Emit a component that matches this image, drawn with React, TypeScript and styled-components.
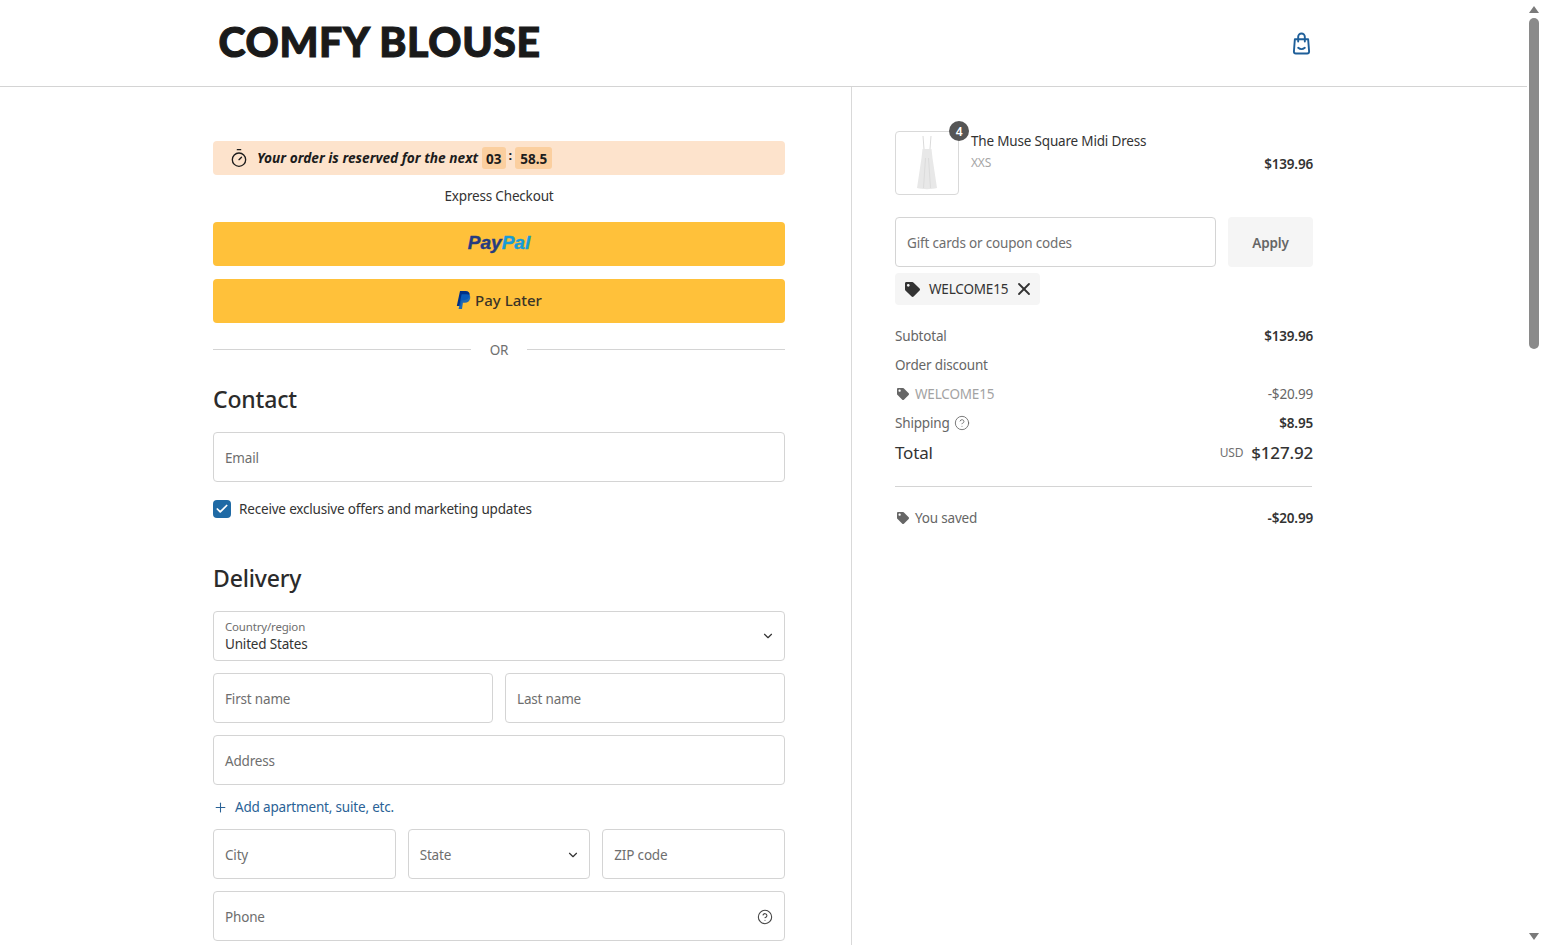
import React from 'react';
import styled, { createGlobalStyle } from 'styled-components';
import { Timer, Check, ChevronDown, Plus, X, CircleHelp } from 'lucide-react';
import { FaTag } from 'react-icons/fa';

const Global = createGlobalStyle`
  html, body { height: 100%; }
  body { margin: 0; background: #fff; color: #333; font-family: "Noto Sans", "Open Sans", Arial, sans-serif; font-size: 13.5px; letter-spacing: -0.18px; overflow: hidden; }
  * { box-sizing: border-box; }
`;

const Shell = styled.div`
  display: flex;
  height: 100vh;
  overflow: hidden;
`;
const Page = styled.div`
  flex: 1;
  min-width: 0;
  display: flex;
  flex-direction: column;
  overflow: hidden;
`;
const ScrollTrack = styled.div`
  width: 14px;
  flex: none;
  display: flex;
  flex-direction: column;
  align-items: center;
`;
const ScrollArrow = styled.div`
  height: 18px;
  display: flex;
  align-items: center;
  justify-content: center;
  color: #7a7a7a;
`;
const ScrollThumb = styled.div`
  width: 10px;
  height: 331px;
  border-radius: 5px;
  background: #8a8a8a;
`;
const ScrollSpace = styled.div`
  flex: 1;
`;

const Header = styled.header`
  height: 87px;
  flex: none;
  border-bottom: 1px solid #d4d4d4;
  display: flex;
  justify-content: center;
`;
const HeaderInner = styled.div`
  width: 1100px;
  display: flex;
  align-items: center;
  justify-content: space-between;
  padding: 0 3px 0 5px;
`;
const Logo = styled.div`
  font-family: Lato, sans-serif;
  font-weight: 900;
  font-size: 41px;
  line-height: 1;
  color: #1a1a1a;
  letter-spacing: 0.65px;
  -webkit-text-stroke: 1.1px #1a1a1a;
  margin-top: -4px;
`;
const BagLink = styled.a`
  display: flex;
  color: #1f5f99;
`;
const Checkout = styled.div`
  flex: 1;
  display: grid;
  grid-template-columns: 852px 1fr;
`;
const Left = styled.main`
  border-right: 1px solid #d9d9d9;
  padding: 54px 66px 0 213px;
  display: flex;
  flex-direction: column;
`;
const Right = styled.aside`
  padding: 44px 0 0 43px;
  width: 461px;
`;
const Banner = styled.div`
  height: 34px;
  border-radius: 4px;
  background: #fde3cc;
  display: flex;
  align-items: center;
  padding: 0 0 2px 16px;
  gap: 8px;
  color: #1c1c1c;
  font-weight: 700;
  font-style: italic;
  font-size: 13.7px;
  letter-spacing: 0;
`;
const BannerIcon = styled(Timer)`
  margin-top: 2px;
`;
const TimerBox = styled.span`
  background: #fbcf9f;
  border-radius: 3px;
  height: 22px;
  padding: 1px 4px 0;
  display: inline-flex;
  align-items: center;
  font-style: normal;
  font-size: 13.5px;
`;
const SecondsBox = styled(TimerBox)`
  padding: 1px 5px 0;
`;
const TimerGroup = styled.span`
  display: inline-flex;
  align-items: center;
  margin: 2px 0 0 -4px;
  gap: 3px;
  font-style: normal;
`;
const Colon = styled.span`
  margin-top: -6px;
  font-size: 13px;
`;
const ExpressLabel = styled.div`
  height: 47px;
  padding-top: 10px;
  text-align: center;
  line-height: 22px;
  color: #333;
`;
const PayButton = styled.button`
  height: 44px;
  border: 0;
  border-radius: 4px;
  background: #ffc13a;
  display: flex;
  align-items: center;
  justify-content: center;
  margin-bottom: 13px;
  padding: 0 0 2px;
  gap: 4px;
  font-family: inherit;
`;
const PayWord = styled.span<{ $tone: string }>`
  font-family: "Liberation Sans", Arial, sans-serif;
  font-size: 19px;
  font-weight: 700;
  font-style: italic;
  color: ${p => p.$tone};
  -webkit-text-stroke: 0.4px ${p => p.$tone};
`;
const PayLogo = styled.span`
  display: inline-flex;
`;
const LaterText = styled.span`
  font-size: 15px;
  font-weight: 500;
  letter-spacing: 0;
  color: #3a3428;
`;
const OrRow = styled.div`
  display: flex;
  align-items: center;
  gap: 19px;
  height: 28px;
  color: #707070;
  &::before, &::after { content: ""; flex: 1; height: 1px; background: #d4d4d4; margin-top: -2px; }
`;
const SectionTitle = styled.h2<{ $top: number; $bottom: number }>`
  margin: ${p => p.$top}px 0 ${p => p.$bottom}px;
  font-size: 23px;
  font-weight: 500;
  line-height: 32px;
  color: #2b2b2b;
`;
const Input = styled.div`
  min-width: 0;
  height: 50px;
  border: 1px solid #d4d4d4;
  border-radius: 4px;
  padding: 1px 11px 0;
  display: flex;
  align-items: center;
  justify-content: space-between;
  color: #6e6e6e;
  background: #fff;
`;
const StackedSelect = styled(Input)`
  padding-top: 0;
  padding-bottom: 0;
`;
const StackedText = styled.div`
  display: flex;
  flex-direction: column;
`;
const SmallLabel = styled.span`
  font-size: 11.5px;
  line-height: 16px;
  color: #6e6e6e;
`;
const SelectValue = styled.span`
  line-height: 19px;
  color: #333;
`;
const Row = styled.div<{ $cols: number }>`
  display: grid;
  grid-template-columns: repeat(${p => p.$cols}, minmax(0, 1fr));
  gap: 12px;
  margin-top: 12px;
`;
const CheckRow = styled.label`
  display: flex;
  align-items: center;
  gap: 8px;
  height: 18px;
  margin: 18px 0 0;
  color: #333;
`;
const CheckBox = styled.span`
  width: 18px;
  height: 18px;
  border-radius: 4px;
  background: #1f6aa5;
  color: #fff;
  display: flex;
  align-items: center;
  justify-content: center;
`;
const AddLink = styled.a`
  display: flex;
  align-items: center;
  gap: 7px;
  height: 20px;
  margin-top: 12px;
  color: #2a6296;
  text-decoration: none;
`;
const SelectChevron = styled(ChevronDown)`
  margin-right: -2px;
  color: #333;
`;
const HelpIcon = styled(CircleHelp)`
  color: #444;
`;
const Product = styled.div`
  display: flex;
  gap: 12px;
  height: 64px;
`;
const Thumb = styled.div`
  position: relative;
  width: 64px;
  height: 64px;
  flex: none;
  border: 1px solid #d9d9d9;
  border-radius: 4px;
  display: flex;
  align-items: center;
  justify-content: center;
`;
const Badge = styled.span`
  position: absolute;
  top: -11px;
  right: -11px;
  width: 20px;
  height: 20px;
  border-radius: 50%;
  background: #555;
  color: #fff;
  font-size: 12px;
  font-weight: 600;
  display: flex;
  align-items: center;
  justify-content: center;
`;
const ProductInfo = styled.div`
  flex: 1;
  display: flex;
  flex-direction: column;
`;
const ProductName = styled.div`
  line-height: 20px;
  color: #333;
`;
const ProductVariant = styled.div`
  margin-top: 2px;
  font-size: 12px;
  line-height: 20px;
  color: #a6a6a6;
`;
const Strong = styled.span`
  font-weight: 600;
  color: #333;
`;
const ProductPrice = styled(Strong)`
  align-self: center;
  margin-top: 2px;
`;
const CouponRow = styled.div`
  display: grid;
  grid-template-columns: 1fr 85px;
  gap: 12px;
  margin-top: 22px;
`;
const ApplyButton = styled.button`
  height: 50px;
  border: 0;
  border-radius: 4px;
  background: #f5f5f5;
  color: #666;
  padding: 2px 0 0;
  font-family: inherit;
  font-size: 13.5px;
  letter-spacing: -0.15px;
  font-weight: 600;
`;
const CouponTag = styled.div`
  display: inline-flex;
  align-items: center;
  height: 32px;
  margin-top: 6px;
  padding: 0 6px 0 10px;
  gap: 9px;
  border-radius: 4px;
  background: #f5f5f5;
  color: #333;
`;
const CouponRemove = styled(X)`
  margin-left: -3px;
`;
const TagIcon = styled(FaTag)<{ $tone?: string }>`
  color: ${p => p.$tone ?? '#333'};
`;
const Summary = styled.div`
  margin-top: 16px;
`;
const SummaryRow = styled.div`
  display: flex;
  align-items: center;
  justify-content: space-between;
  height: 29px;
  color: #666;
`;
const SummaryLabel = styled.span<{ $muted?: boolean }>`
  display: flex;
  align-items: center;
  gap: 5px;
  color: ${p => (p.$muted ? '#a3a3a3' : '#666')};
`;
const ShippingLabel = styled(SummaryLabel)`
  gap: 4px;
`;
const InlineIcon = styled.span`
  display: inline-flex;
  width: 15px;
  justify-content: center;
`;
const TotalRow = styled.div`
  display: flex;
  align-items: center;
  justify-content: space-between;
  height: 32px;
  padding-bottom: 2px;
  margin-bottom: 17px;
`;
const TotalLabel = styled.span`
  font-size: 17px;
  color: #333;
`;
const TotalValue = styled.span`
  display: flex;
  align-items: center;
  gap: 8px;
`;
const Currency = styled.span`
  font-size: 12px;
  color: #707070;
`;
const Amount = styled.span`
  font-size: 17px;
  font-weight: 500;
  color: #333;
`;
const Divider = styled.div`
  height: 1px;
  width: 417px;
  background: #d4d4d4;
  margin-bottom: 16px;
`;

const BagIcon = () => (
  <svg width="19" height="23" viewBox="0 0 20 24" fill="none" stroke="currentColor" strokeWidth="2" strokeLinecap="round" strokeLinejoin="round">
    <path d="M3 7.5h14l1 13a2 2 0 0 1-2 2H4a2 2 0 0 1-2-2z" />
    <path d="M6.5 10V5a3.5 3.5 0 0 1 7 0v5" />
    <path d="M6.5 16.5c2 1.6 5 1.6 7 0" />
  </svg>
);

const PayPalMark = () => (
  <svg width="15" height="18" viewBox="0 0 15 18">
    <path d="M4 0h5.5c3 0 4.6 1.6 4.1 4.3C13 7.6 10.8 9.2 7.8 9.2H5.6L4.6 15H0.8z" fill="#003087" />
    <path d="M5.6 3.2h5c2.6 0 4.1 1.5 3.6 4-.6 3-2.6 4.5-5.4 4.5H6.9L6 18H2.6z" fill="#0a5fc0" opacity="0.9" />
  </svg>
);

const DressImage = () => (
  <svg width="24" height="56" viewBox="0 0 24 56">
    <path d="M8 1l1 13M16 1l-1 13" stroke="#d0d0d0" strokeWidth="0.8" fill="none" />
    <path d="M7.5 14h9l1 9 4.500 30c-5 1.500-15 1.500-20 0l4.500-30z" fill="#e8e8e8" />
    <path d="M10.500 23l-2 30M13.500 23l2 30" stroke="#dcdcdc" strokeWidth="1" fill="none" />
  </svg>
);

const Arrow = ({ down }: { down?: boolean }) => (
  <svg width="10" height="7" viewBox="0 0 10 7" fill="currentColor">
    <path d={down ? 'M0 0h10L5 7z' : 'M5 0l5 7H0z'} />
  </svg>
);

export default function App() {
  return (
    <Shell>
      <Global />
      <Page>
        <Header>
          <HeaderInner>
            <Logo>COMFY BLOUSE</Logo>
            <BagLink href="#"><BagIcon /></BagLink>
          </HeaderInner>
        </Header>
        <Checkout>
          <Left>
            <Banner>
              <BannerIcon size={20} strokeWidth={1.6} />
              <span>Your order is reserved for the next</span>
              <TimerGroup>
                <TimerBox>03</TimerBox>
                <Colon>:</Colon>
                <SecondsBox>58.5</SecondsBox>
              </TimerGroup>
            </Banner>
            <ExpressLabel>Express Checkout</ExpressLabel>
            <PayButton>
              <PayWord $tone="#253b80">Pay<PayWord $tone="#179bd7">Pal</PayWord></PayWord>
            </PayButton>
            <PayButton>
              <PayLogo><PayPalMark /></PayLogo>
              <LaterText>Pay Later</LaterText>
            </PayButton>
            <OrRow>OR</OrRow>
            <SectionTitle $top={19} $bottom={17}>Contact</SectionTitle>
            <Input>Email</Input>
            <CheckRow>
              <CheckBox><Check size={14} strokeWidth={3} /></CheckBox>
              Receive exclusive offers and marketing updates
            </CheckRow>
            <SectionTitle $top={44} $bottom={17}>Delivery</SectionTitle>
            <StackedSelect>
              <StackedText>
                <SmallLabel>Country/region</SmallLabel>
                <SelectValue>United States</SelectValue>
              </StackedText>
              <SelectChevron size={14} strokeWidth={2} />
            </StackedSelect>
            <Row $cols={2}>
              <Input>First name</Input>
              <Input>Last name</Input>
            </Row>
            <Row $cols={1}><Input>Address</Input></Row>
            <AddLink href="#"><Plus size={15} strokeWidth={1.7} />Add apartment, suite, etc.</AddLink>
            <Row $cols={3}>
              <Input>City</Input>
              <Input>State<SelectChevron size={14} strokeWidth={2} /></Input>
              <Input>ZIP code</Input>
            </Row>
            <Row $cols={1}>
              <Input>Phone<HelpIcon size={16} strokeWidth={1.6} /></Input>
            </Row>
          </Left>
          <Right>
            <Product>
              <Thumb>
                <DressImage />
                <Badge>4</Badge>
              </Thumb>
              <ProductInfo>
                <ProductName>The Muse Square Midi Dress</ProductName>
                <ProductVariant>XXS</ProductVariant>
              </ProductInfo>
              <ProductPrice>$139.96</ProductPrice>
            </Product>
            <CouponRow>
              <Input>Gift cards or coupon codes</Input>
              <ApplyButton>Apply</ApplyButton>
            </CouponRow>
            <CouponTag>
              <TagIcon size={15} />
              WELCOME15
              <CouponRemove size={20} strokeWidth={2.2} />
            </CouponTag>
            <Summary>
              <SummaryRow><SummaryLabel>Subtotal</SummaryLabel><Strong>$139.96</Strong></SummaryRow>
              <SummaryRow><SummaryLabel>Order discount</SummaryLabel></SummaryRow>
              <SummaryRow>
                <SummaryLabel $muted><InlineIcon><TagIcon size={12} $tone="#666" /></InlineIcon>WELCOME15</SummaryLabel>
                <span>-$20.99</span>
              </SummaryRow>
              <SummaryRow>
                <ShippingLabel>Shipping<CircleHelp size={16} strokeWidth={1.3} /></ShippingLabel>
                <Strong>$8.95</Strong>
              </SummaryRow>
              <TotalRow>
                <TotalLabel>Total</TotalLabel>
                <TotalValue><Currency>USD</Currency><Amount>$127.92</Amount></TotalValue>
              </TotalRow>
              <Divider />
              <SummaryRow>
                <SummaryLabel><InlineIcon><TagIcon size={12} $tone="#666" /></InlineIcon>You saved</SummaryLabel>
                <Strong>-$20.99</Strong>
              </SummaryRow>
            </Summary>
          </Right>
        </Checkout>
      </Page>
      <ScrollTrack>
        <ScrollArrow><Arrow /></ScrollArrow>
        <ScrollThumb />
        <ScrollSpace />
        <ScrollArrow><Arrow down /></ScrollArrow>
      </ScrollTrack>
    </Shell>
  );
}
